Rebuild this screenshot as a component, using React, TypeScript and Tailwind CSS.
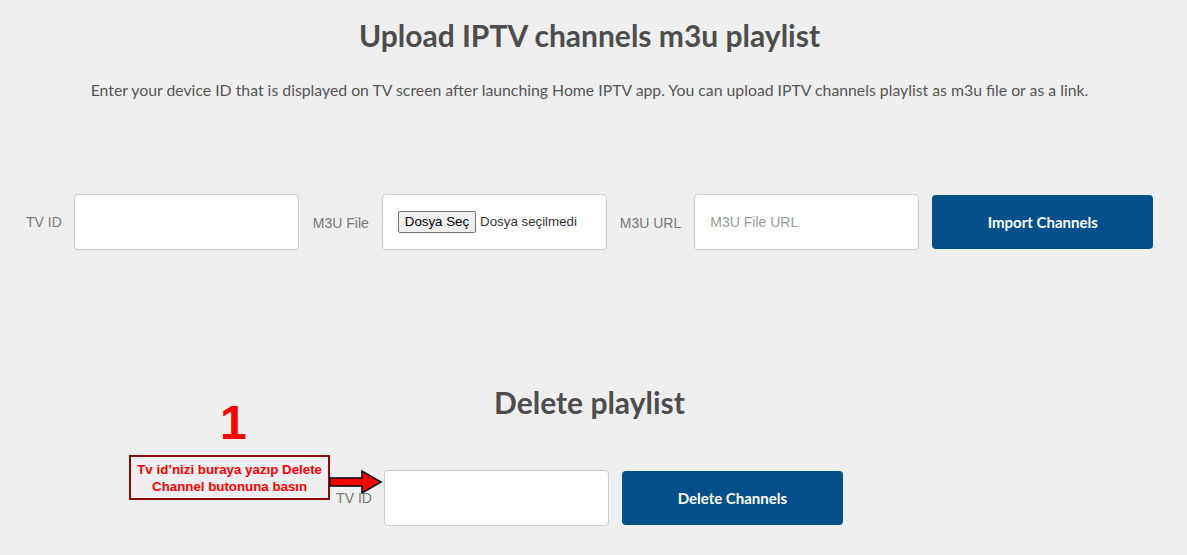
import React from "react";

const lato = { fontFamily: "Lato, 'Open Sans', sans-serif" };

function Label({ children }: { children: React.ReactNode }) {
  return (
    <span className="text-[14px] text-[#777] font-['Liberation_Sans',Arial,sans-serif]">
      {children}
    </span>
  );
}

function Box({ children }: { children?: React.ReactNode }) {
  return (
    <div className="w-[225px] h-[56px] bg-white border border-[#ccc] rounded-[4px] flex items-center px-[15px] font-['Liberation_Sans',Arial,sans-serif] text-[14px]">
      {children}
    </div>
  );
}

function Arrow() {
  return (
    <svg width="54" height="26" viewBox="0 0 54 26" className="block">
      <path
        d="M1 9 L33 9 L33 2 L52 13 L33 24 L33 17 L1 17 Z"
        fill="#ff0000"
        stroke="#000"
        strokeWidth="1.5"
      />
    </svg>
  );
}

export default function App() {
  return (
    <div className="min-h-screen w-full bg-[#efefef] overflow-hidden pr-[8px]" style={lato}>
      <section className="pt-[18px]">
        <h1 className="text-center text-[30px] leading-[34px] font-bold text-[#4d4d4d]">
          Upload IPTV channels m3u playlist
        </h1>
        <p className="text-center text-[15.8px] leading-[20px] text-[#555] mt-[28px]">
          Enter your device ID that is displayed on TV screen after launching Home IPTV app. You can upload IPTV channels playlist as m3u file or as a link.
        </p>

        <div className="flex items-center pl-[26px] mt-[94px]">
          <Label>TV ID</Label>
          <div className="ml-[12px]">
            <Box />
          </div>
          <div className="ml-[14px]">
            <Label>M3U File</Label>
          </div>
          <div className="ml-[13px]">
            <Box>
              <span className="border border-[#767676] bg-[#efefef] rounded-[2px] px-[6px] h-[22px] flex items-center text-black text-[13.3px]">
                Dosya Seç
              </span>
              <span className="ml-[4px] text-[#333] text-[13.3px]">Dosya seçilmedi</span>
            </Box>
          </div>
          <div className="ml-[13px]">
            <Label>M3U URL</Label>
          </div>
          <div className="ml-[13px]">
            <Box>
              <span className="text-[#999]">M3U File URL</span>
            </Box>
          </div>
          <button className="ml-[13px] w-[221px] h-[54px] rounded-[4px] bg-[#05508a] text-white text-[15px] font-bold">
            Import Channels
          </button>
        </div>
      </section>

      <section className="mt-[135px]">
        <h2 className="text-center text-[30px] leading-[34px] font-bold text-[#4d4d4d]">
          Delete playlist
        </h2>
        <div className="flex justify-center mt-[51px]">
          <div className="relative flex items-center">
            <div className="absolute left-[-207px] top-[-70px] flex flex-col items-start">
              <span className="ml-[91px] text-[#ff0000] text-[48px] leading-[46px] font-bold font-['Liberation_Sans',Arial,sans-serif]">
                1
              </span>
              <div className="flex items-center mt-[9px]">
                <div className="w-[201px] h-[45px] shrink-0 border-2 border-[#8b0a0a] flex flex-col items-center justify-center text-[#ff0000] font-bold text-[13.3px] leading-[17px] font-['Liberation_Sans',Arial,sans-serif]">
                  <span>Tv id’nizi buraya yazıp Delete</span>
                  <span>Channel butonuna basın</span>
                </div>
                <div className="shrink-0 -ml-[1px] mt-[8px]">
                  <Arrow />
                </div>
              </div>
            </div>
            <Label>TV ID</Label>
            <div className="ml-[12px]">
              <Box />
            </div>
            <button className="ml-[13px] w-[221px] h-[54px] rounded-[4px] bg-[#05508a] text-white text-[15px] font-bold">
              Delete Channels
            </button>
          </div>
        </div>
      </section>
    </div>
  );
}
